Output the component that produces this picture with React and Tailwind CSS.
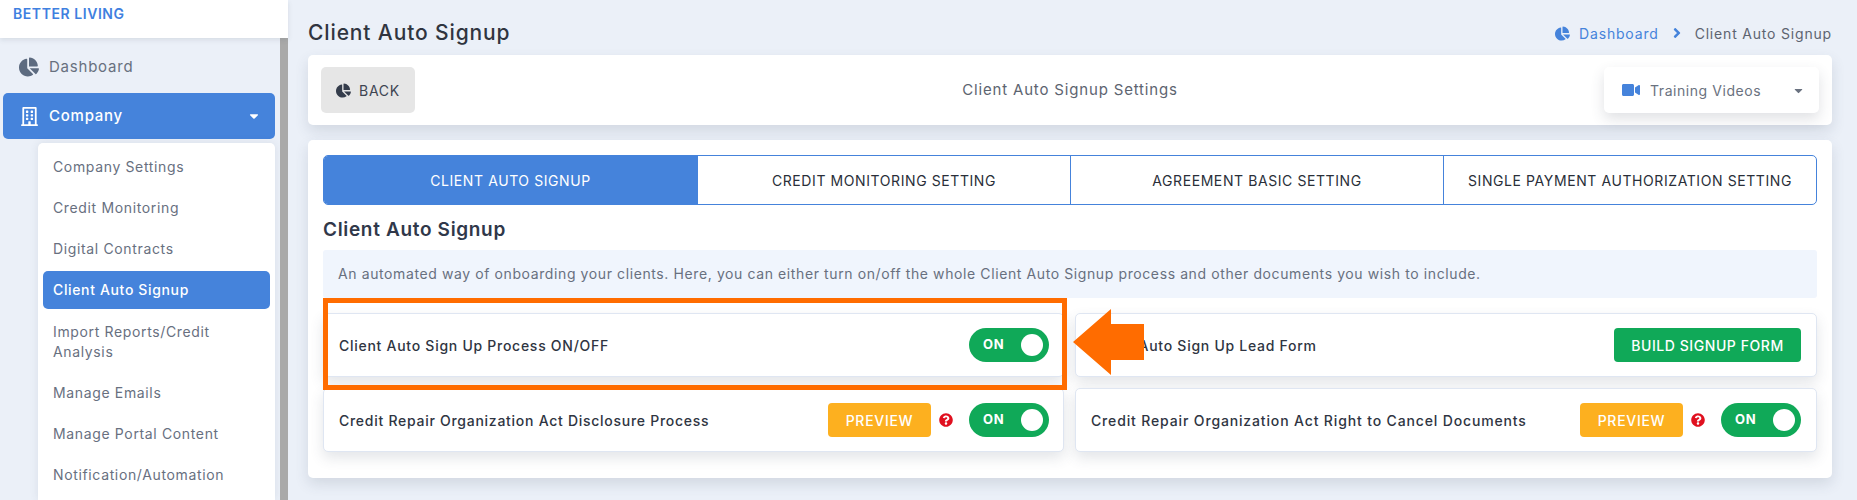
import React from "react";
import { FaChartPie, FaCaretDown, FaVideo, FaQuestionCircle, FaAngleRight, FaRegBuilding } from "react-icons/fa";

const menu = ["Company Settings", "Credit Monitoring", "Digital Contracts", "Client Auto Signup", "Import Reports/Credit Analysis", "Manage Emails", "Manage Portal Content", "Notification/Automation"];
const tabs = ["CLIENT AUTO SIGNUP", "CREDIT MONITORING SETTING", "AGREEMENT BASIC SETTING", "SINGLE PAYMENT AUTHORIZATION SETTING"];

function Toggle() {
  return (
    <div className="flex h-[34px] w-[80px] shrink-0 items-center justify-between rounded-full bg-[#10a958] pl-[14px] pr-[6px]">
      <span className="text-[13px] font-bold tracking-[0.05em] text-white">ON</span>
      <span className="h-[22px] w-[22px] rounded-full bg-white" />
    </div>
  );
}

function Preview() {
  return (
    <>
      <button className="flex h-[34px] w-[103px] shrink-0 items-center justify-center rounded-[4px] bg-[#fdb01f] text-[14px] font-medium tracking-[0.05em] text-white">PREVIEW</button>
      <FaQuestionCircle className="ml-[8px] mr-[16px] h-[14px] w-[14px] shrink-0 text-[#e0101f]" />
    </>
  );
}

function Row({ label, left, wide, children }) {
  return (
    <div className={`flex h-[64px] items-center justify-between rounded-[5px] border border-[#dfe6f2] bg-white pl-[15px] ${left ? "pr-[14px]" : "pr-[15px]"} shadow-[0_6px_14px_rgba(60,70,90,0.14)]`}>
      <span className={`text-[14px] font-medium text-[#2f3542] ${wide ? "tracking-[0.061em]" : "tracking-[0.052em]"}`}>{label}</span>
      <div className="flex items-center">{children}</div>
    </div>
  );
}

export default function App() {
  return (
    <div className="flex h-[500px] w-[1857px] overflow-hidden bg-[#ebf0f8] font-['Inter',sans-serif]">
      <aside className="flex w-[288px] shrink-0 flex-col">
        <div className="z-10 h-[38px] shrink-0 bg-white pl-[13px] pt-[5px] text-[14px] font-semibold leading-[18px] tracking-[0.04em] text-[#3f80e0] shadow-[0_2px_5px_rgba(60,70,90,0.12)]">BETTER LIVING</div>
        <div className="flex min-h-0 flex-1">
          <nav className="flex w-[280px] flex-col pl-[3px] pr-[5px]">
            <div className="flex h-[55px] shrink-0 items-center pl-[16px] pt-[3px] text-[15px] tracking-[0.052em] text-[#68707f]">
              <FaChartPie className="h-[20px] w-[20px] text-[#5d6b80]" />
              <span className="ml-[10px]">Dashboard</span>
            </div>
            <div className="flex h-[46px] shrink-0 items-center rounded-[5px] bg-[#4583db] pl-[17px] pr-[14px] text-[15px] font-medium tracking-[0.05em] text-white">
              <FaRegBuilding className="h-[19px] w-[19px]" />
              <span className="ml-[10px] flex-1">Company</span>
              <FaCaretDown className="h-[14px] w-[14px]" />
            </div>
            <div className="ml-[35px] mt-[4px] flex-1 rounded-t-[5px] bg-white px-[5px] pt-[5px] shadow-[0_0_8px_rgba(60,70,90,0.1)]">
              {menu.map((m) => (
                <div
                  key={m}
                  className={`mb-[3px] flex min-h-[38px] items-center rounded-[5px] px-[10px] text-[14px] leading-[20px] tracking-[0.046em] ${m === "Client Auto Signup" ? "bg-[#4583db] font-medium text-white" : "text-[#68707f]"} ${m.startsWith("Import") ? "min-h-[59px]" : ""}`}
                >
                  <span className="block max-w-[195px]">{m}</span>
                </div>
              ))}
            </div>
          </nav>
          <div className="w-[8px] bg-[#a9a9a9]" />
        </div>
      </aside>

      <main className="min-w-0 flex-1 px-[20px] pr-[25px]">
        <div className="flex h-[55px] items-center justify-between pt-[11px]">
          <h1 className="text-[21px] font-medium tracking-[0.042em] text-[#30353f]">Client Auto Signup</h1>
          <div className="flex items-center text-[14px] tracking-[0.058em] text-[#5d6470]">
            <FaChartPie className="h-[15px] w-[15px] text-[#4583db]" />
            <span className="ml-[9px] text-[#4583db]">Dashboard</span>
            <FaAngleRight className="mx-[10px] h-[16px] w-[16px] text-[#4583db]" />
            <span>Client Auto Signup</span>
          </div>
        </div>

        <section className="grid h-[70px] grid-cols-[1fr_auto_1fr] items-center rounded-[5px] bg-white px-[13px] shadow-[0_6px_14px_rgba(60,70,90,0.14)]">
          <button className="flex h-[46px] w-[94px] items-center justify-center rounded-[5px] bg-[#e6e6e6] text-[14px] tracking-[0.05em] text-[#3e4552]">
            <FaChartPie className="mr-[8px] h-[15px] w-[15px] text-[#343c4b]" />BACK
          </button>
          <span className="text-[15px] tracking-[0.055em] text-[#5d6470]">Client Auto Signup Settings</span>
          <div className="flex h-[46px] w-[215px] items-center justify-self-end rounded-[5px] bg-white pl-[18px] pr-[14px] text-[14px] tracking-[0.04em] text-[#6a7280] shadow-[0_6px_14px_rgba(60,70,90,0.16)]">
            <FaVideo className="h-[16px] w-[18px] text-[#4583db]" />
            <span className="ml-[10px] flex-1">Training Videos</span>
            <FaCaretDown className="h-[13px] w-[13px] text-[#6a7280]" />
          </div>
        </section>

        <section className="relative mt-[15px] h-[338px] rounded-[5px] bg-white px-[15px] pt-[15px] shadow-[0_6px_14px_rgba(60,70,90,0.14)]">
          <div className="grid h-[50px] grid-cols-4 overflow-hidden rounded-[5px] border border-[#4583db]">
            {tabs.map((t, i) => (
              <div key={t} className={`flex items-center justify-center whitespace-nowrap text-[14px] font-normal tracking-[0.042em] ${i === 0 ? "bg-[#4583db] text-white" : "border-l border-[#4583db] text-[#2a2f39]"}`}>{t}</div>
            ))}
          </div>
          <h2 className="mt-[14px] h-[31px] text-[19px] font-semibold leading-[22px] tracking-[0.035em] text-[#30384a]">Client Auto Signup</h2>
          <div className="flex h-[48px] items-center rounded-[3px] bg-[#f0f5fd] px-[15px] pb-[1px] text-[14px] tracking-[0.043em] text-[#68707f]">
            An automated way of onboarding your clients. Here, you can either turn on/off the whole Client Auto Signup process and other documents you wish to include.
          </div>
          <div className="mt-[15px] grid grid-cols-[741px_1fr] gap-x-[11px] gap-y-[11px]">
            <Row left label="Client Auto Sign Up Process ON/OFF"><Toggle /></Row>
            <Row label="Client Auto Sign Up Lead Form">
              <button className="flex h-[34px] w-[187px] items-center justify-center rounded-[4px] bg-[#10a958] text-[14px] font-medium tracking-[0.04em] text-white">BUILD SIGNUP FORM</button>
            </Row>
            <Row left label="Credit Repair Organization Act Disclosure Process"><Preview /><Toggle /></Row>
            <Row wide label="Credit Repair Organization Act Right to Cancel Documents"><Preview /><Toggle /></Row>
          </div>
          <div className="pointer-events-none absolute left-[15px] top-[158px] h-[92px] w-[744px] border-[5px] border-[#ff6c00]" />
          <svg className="pointer-events-none absolute left-[765px] top-[169px] h-[66px] w-[71px]" viewBox="0 0 71 66">
            <path d="M0 33 L38 0 V15 H71 V51 H38 V66 Z" fill="#ff6c00" />
          </svg>
        </section>
      </main>
    </div>
  );
}
